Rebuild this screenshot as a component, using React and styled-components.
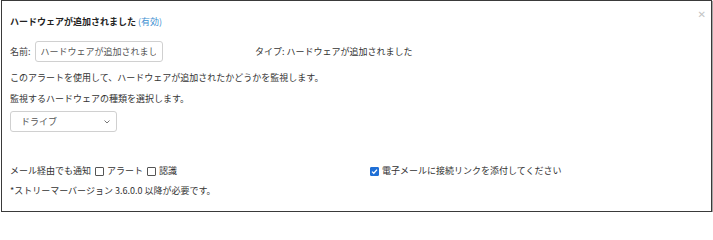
import React from 'react';
import styled, { createGlobalStyle } from 'styled-components';

const Global = createGlobalStyle`
  body {
    margin: 0;
    background: #fff;
    font-family: "Noto Sans CJK JP", "Noto Sans", sans-serif;
    color: #333;
  }
`;

const Frame = styled.div`
  position: relative;
  box-sizing: border-box;
  width: 711px;
  height: 212px;
  margin-left: 1px;
  border: 1px solid #3a3a3a;
  box-shadow: 1px 1px 1px rgba(0, 0, 0, 0.35);
  padding: 14px 0 0 8px;
  font-size: 9px;
  background: #fff;
`;

const Close = styled.span`
  position: absolute;
  top: 9px;
  right: 5px;
  font-size: 10px;
  line-height: 10px;
  color: #c4c4c4;
  font-family: "DejaVu Sans", sans-serif;
`;

const Title = styled.div`
  font-weight: bold;
  line-height: 14px;
  color: #222;
`;

const Status = styled.span`
  font-weight: normal;
  color: #3d8fd1;
`;

const NameRow = styled.div`
  display: grid;
  grid-template-columns: 245px auto;
  align-items: center;
  margin-top: 12px;
`;

const Field = styled.label`
  display: flex;
  align-items: center;
  gap: 4px;
  color: #444;
`;

const TextInput = styled.input`
  box-sizing: border-box;
  width: 128px;
  height: 21px;
  border: 1px solid #d0d0d0;
  border-radius: 3px;
  padding: 0 6px 0 5px;
  font: inherit;
  color: #555;
  outline: none;
`;

const TypeText = styled.div`
  color: #333;
`;

const Para = styled.p`
  margin: 0;
  line-height: 21px;
  color: #333;
  &:first-of-type {
    margin-top: 5px;
  }
`;

const SelectBox = styled.div`
  box-sizing: border-box;
  width: 107px;
  height: 21px;
  margin-top: 2px;
  border: 1px solid #d0d0d0;
  border-radius: 3px;
  display: flex;
  align-items: center;
  justify-content: space-between;
  padding: 0 6px 0 10px;
  color: #555;
`;

const Options = styled.div`
  display: grid;
  grid-template-columns: 360px auto;
  align-items: center;
  margin-top: 32px;
  line-height: 14px;
`;

const CheckGroup = styled.div`
  display: flex;
  align-items: center;
  gap: 2px;
`;

const Box = styled.span`
  box-sizing: border-box;
  display: inline-flex;
  align-items: center;
  justify-content: center;
  width: 9px;
  height: 9px;
  margin: 0 1px 0 ${p => p.$gap || 0}px;
  border: 1px solid ${p => (p.$checked ? '#1f6fd6' : '#555')};
  background: ${p => (p.$checked ? '#1f6fd6' : '#fff')};
  border-radius: 1px;
`;

const Note = styled.div`
  margin-top: 6px;
  line-height: 14px;
  color: #333;
`;

const Check = ({ checked, gap }) => (
  <Box $checked={checked} $gap={gap}>
    {checked && (
      <svg width="7" height="7" viewBox="0 0 7 7">
        <path d="M1 3.6 L2.8 5.3 L6 1.6" fill="none" stroke="#fff" strokeWidth="1.3" />
      </svg>
    )}
  </Box>
);

export default function App() {
  return (
    <>
      <Global />
      <Frame>
        <Close>✕</Close>
        <Title>
          ハードウェアが追加されました <Status>(有効)</Status>
        </Title>
        <NameRow>
          <Field>
            名前:
            <TextInput defaultValue="ハードウェアが追加されました" />
          </Field>
          <TypeText>タイプ: ハードウェアが追加されました</TypeText>
        </NameRow>
        <Para>このアラートを使用して、ハードウェアが追加されたかどうかを監視します。</Para>
        <Para>監視するハードウェアの種類を選択します。</Para>
        <SelectBox>
          ドライブ
          <svg width="6" height="4" viewBox="0 0 6 4">
            <path d="M0.5 0.5 L3 3 L5.5 0.5" fill="none" stroke="#777" strokeWidth="1" />
          </svg>
        </SelectBox>
        <Options>
          <CheckGroup>
            メール経由でも通知
            <Check gap={2} />
            アラート
            <Check gap={2} />
            認識
          </CheckGroup>
          <CheckGroup>
            <Check checked />
            電子メールに接続リンクを添付してください
          </CheckGroup>
        </Options>
        <Note>*ストリーマーバージョン 3.6.0.0 以降が必要です。</Note>
      </Frame>
    </>
  );
}
